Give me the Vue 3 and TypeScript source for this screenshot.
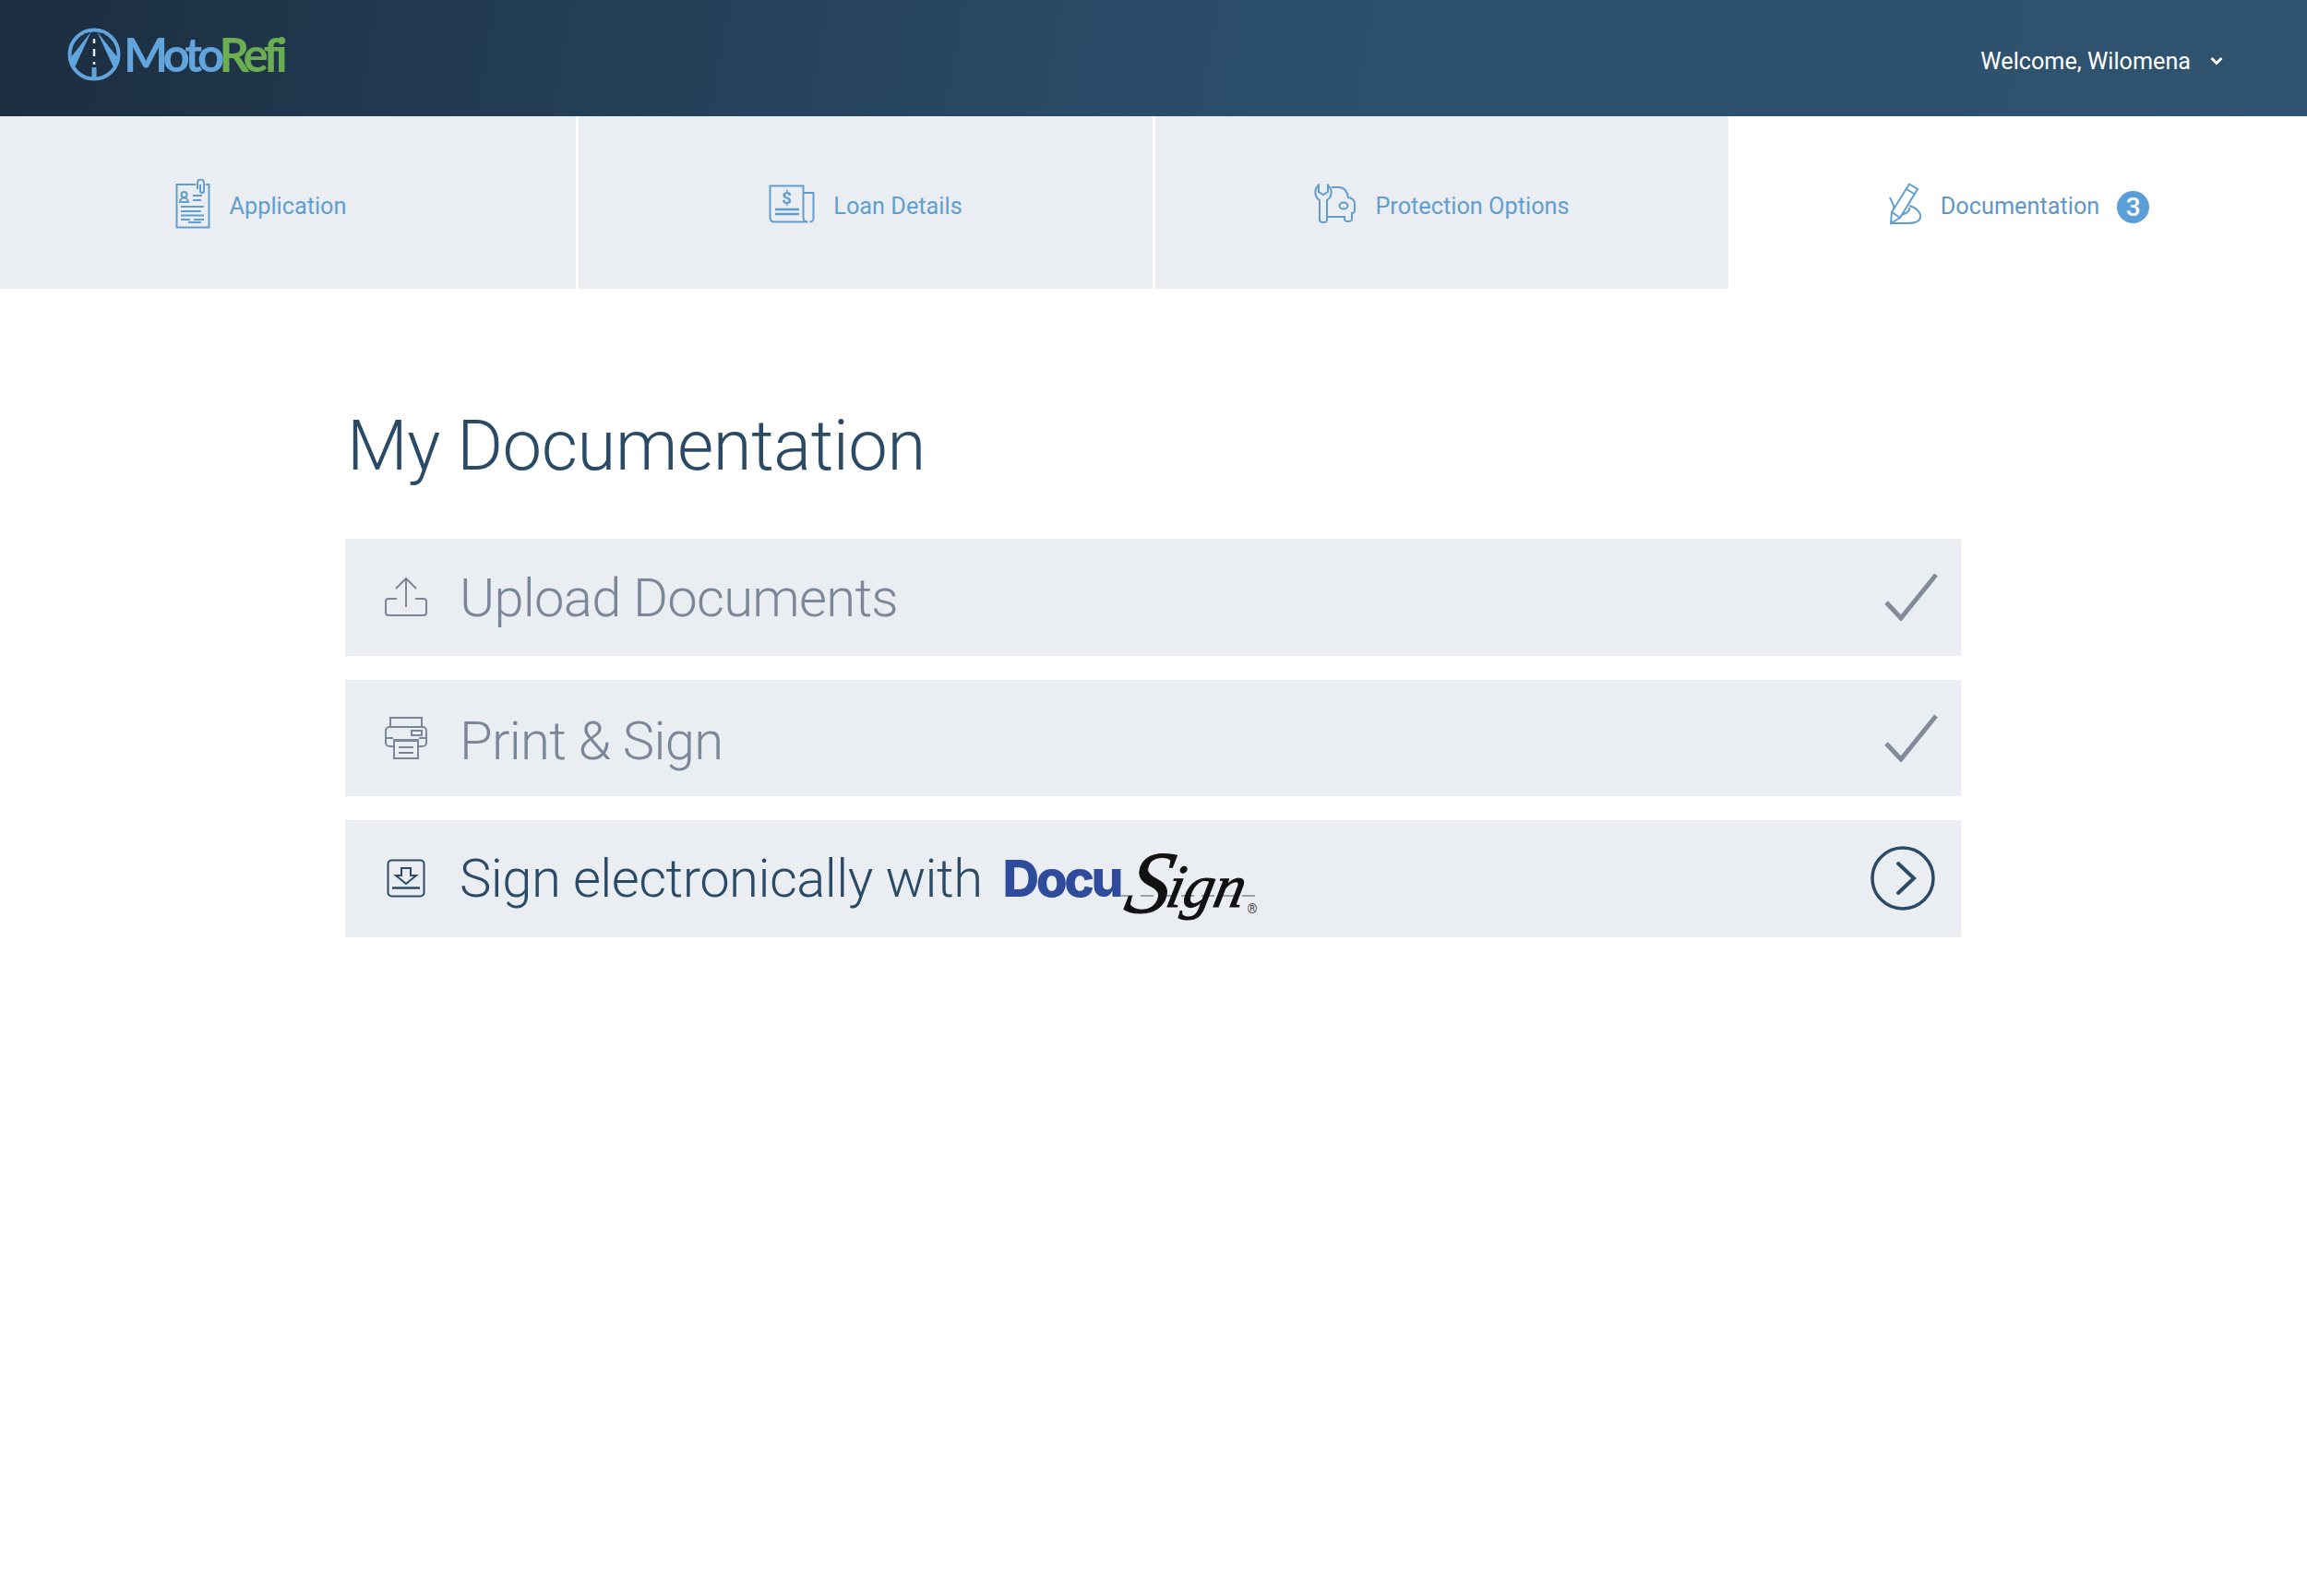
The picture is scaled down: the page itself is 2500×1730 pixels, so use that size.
<script setup lang="ts">
type Tab = {
  key: string;
  label: string;
  active?: boolean;
  badge?: number;
};

const tabs: Array<Tab> = [
  { key: "application", label: "Application" },
  { key: "loan", label: "Loan Details" },
  { key: "protection", label: "Protection Options" },
  { key: "documentation", label: "Documentation", active: true, badge: 3 },
];
</script>

<template>
  <div class="page">
    <header class="top-bar">
      <div class="logo">
        <svg class="logo-mark" viewBox="0 0 58 58" fill="none">
          <circle cx="29" cy="29" r="26.5" stroke="#62a4dc" stroke-width="4" />
          <path d="M26 4 L3 33 L8 43 Z" fill="#62a4dc" />
          <path d="M32 4 L55 33 L50 43 Z" fill="#62a4dc" />
          <path d="M20 6 L6 25 M38 6 L52 25" stroke="#22394f" stroke-width="2" />
          <path d="M29 12v5M29 23v8M29 37v3" stroke="#dfeaf3" stroke-width="2.5" />
          <path d="M29 43v12" stroke="#62a4dc" stroke-width="5" />
        </svg>
        <span class="logo-text"><span class="moto">Moto</span><span class="refi">Refi</span></span>
      </div>
      <div class="user">
        <span>Welcome, Wilomena</span>
        <svg class="chevron" viewBox="0 0 14 10" fill="none">
          <path d="M1.5 2 L7 7.5 L12.5 2" stroke="#fff" stroke-width="3" />
        </svg>
      </div>
    </header>

    <nav class="tabs">
      <div
        v-for="tab in tabs"
        :key="tab.key"
        class="tab"
        :class="[tab.key, { active: tab.active }]"
      >
        <svg v-if="tab.key === 'application'" class="tab-icon" width="38" height="54" viewBox="0 0 38 54" fill="none">
          <path d="M22 6H1.5v46.5h35V6H33" />
          <path d="M24 11V4a3.5 3.5 0 0 1 7 0v9a2 2 0 0 1-4 0V6" />
          <circle cx="9.5" cy="17" r="3" />
          <path d="M5 25c0-6 9-6 9 0zM19 18h10M19 23h9M6 30h25M6 35h22M6 39.5h25M6 44h10M14 47h14M20 44h11" />
        </svg>
        <svg v-else-if="tab.key === 'loan'" class="tab-icon" width="50" height="42" viewBox="0 0 50 42" fill="none">
          <path d="M1.5 1.5h36v34c0 3 2 5 5 5H6c-3 0-4.5-2-4.5-5z" />
          <path d="M37.5 9h11v28c0 2-2 3.5-4 3.500" />
          <path d="M7 27h26M7 32h26" stroke-width="2.5" />
          <text x="19.500" y="21" class="dollar">$</text>
        </svg>
        <svg v-else-if="tab.key === 'protection'" class="tab-icon" width="46" height="44" viewBox="0 0 46 44" fill="none">
          <path d="M5 1.5C0 6 0 14 6 18v21c0 4 8 4 8 0V18c6-4 6-12 1-16.500V9l-5 3-5-3z" />
          <path d="M19 4h8c6 0 9 5 10 11 5 1 7 3 7 7v7c0 2-1 3-3 3v6c0 4-8 4-8 0v-2H14" />
          <ellipse cx="32" cy="24" rx="4.5" ry="3.5" />
        </svg>
        <svg v-else class="tab-icon" width="36" height="46" viewBox="0 0 36 46" fill="none">
          <path d="M2 44 L3 32 L22 1.5 L31 7 L12 38 Z" />
          <path d="M19 7 L28 12.5 M3 32 L12 38" />
          <path d="M1 16c2 5 5 8 4 12M22 25c8 2 13 8 12 13-1 5-8 6-14 6-6 0-12 0-18 0" />
          <path d="M14 35c4-2 9-3 8-8" />
        </svg>
        <span class="tab-label">{{ tab.label }}</span>
        <span v-if="tab.badge" class="badge">{{ tab.badge }}</span>
      </div>
    </nav>

    <main class="content">
      <h1 class="title">My Documentation</h1>
      <div class="rows">
        <div class="row done">
          <svg class="row-icon" width="48" height="44" viewBox="0 0 48 44" fill="none">
            <path d="M14 24H5a3 3 0 0 0-3 3v12a3 3 0 0 0 3 3h38a3 3 0 0 0 3-3V27a3 3 0 0 0-3-3h-9" />
            <path d="M24 33V2M13 13 L24 2 L35 13" />
          </svg>
          <span class="row-text up">Upload Documents</span>
          <svg class="check" width="58" height="52" viewBox="0 0 58 52" fill="none">
            <path d="M2 32 L18 49 L56 2" />
          </svg>
        </div>
        <div class="row done">
          <svg class="row-icon" width="48" height="48" viewBox="0 0 48 48" fill="none">
            <path d="M7 12V2h34v10" />
            <path d="M10 33H6a4 4 0 0 1-4-4V16a4 4 0 0 1 4-4h36a4 4 0 0 1 4 4v13a4 4 0 0 1-4 4h-4" />
            <path d="M2 24h8M38 24h8M10 26h28" />
            <path d="M11 27h26v19H11zM16 34h16M16 40h16" />
            <rect x="30" y="16" width="11" height="5" />
          </svg>
          <span class="row-text shift">Print &amp; Sign</span>
          <svg class="check" width="58" height="52" viewBox="0 0 58 52" fill="none">
            <path d="M2 32 L18 49 L56 2" />
          </svg>
        </div>
        <div class="row live">
          <svg class="row-icon sign" width="42" height="42" viewBox="0 0 42 42" fill="none">
            <rect x="1.5" y="1.5" width="39" height="39" rx="4" />
            <path d="M16 10h10v8h6L21 27 10 18h6z" />
            <path d="M6 31.5h30" stroke-width="2.5" />
          </svg>
          <span class="row-text">Sign electronically with</span>
          <div class="docusign">
            <span class="docu">Docu</span>
            <span class="dash"></span>
            <span class="script"><span class="big-s">S</span>ign</span>
            <span class="reg">®</span>
          </div>
          <svg class="go" width="70" height="70" viewBox="0 0 70 70" fill="none">
            <circle cx="35" cy="35" r="33" />
            <path d="M30 19 L47 35 L30 51" stroke-width="4" stroke-linecap="round" />
          </svg>
        </div>
      </div>
    </main>
  </div>
</template>

<style>
html,
body {
  margin: 0;
  background: #fff;
}
</style>

<style scoped>
.page {
  min-height: 1730px;
  background: #fff;
  font-family: Roboto, "Liberation Sans", sans-serif;
}

.top-bar {
  display: flex;
  align-items: center;
  justify-content: space-between;
  box-sizing: border-box;
  height: 126px;
  padding: 0 91px 0 73px;
  background: linear-gradient(100deg, #1c2d3f 0%, #223c54 22%, #2b4e6b 55%, #30546f 100%);
}

.logo {
  display: flex;
  align-items: center;
  gap: 3px;
  margin-top: -8px;
}

.logo-mark {
  width: 58px;
  height: 58px;
}

.logo-text {
  font-family: Lato, sans-serif;
  font-size: 51px;
  font-weight: 700;
  letter-spacing: -5px;
  line-height: 58px;
}

.moto {
  color: #62a4dc;
}

.refi {
  color: #6aae4f;
}

.user {
  display: flex;
  align-items: center;
  gap: 21px;
  margin-top: 6px;
  color: #fff;
  font-size: 25.2px;
  font-weight: 400;
}

.chevron {
  width: 14px;
  height: 10px;
}

.tabs {
  display: grid;
  grid-template-columns: 624px 622px 621px 1fr;
  gap: 3px;
  height: 187px;
}

.tab {
  display: flex;
  align-items: center;
  justify-content: center;
  padding-top: 3px;
  background: #eaeef3;
  color: #629ecd;
  font-size: 25.3px;
}

.tab.application {
  padding-right: 58px;
}

.tab.active {
  background: #fff;
  color: #5f96c6;
}

.tab-icon {
  margin-right: 20px;
  stroke: #629ecd;
  stroke-width: 2;
}

.dollar {
  fill: #629ecd;
  stroke: none;
  font-family: Roboto, sans-serif;
  font-size: 19px;
  font-weight: 700;
  text-anchor: middle;
}

.tab-label {
  margin-top: 6px;
  line-height: 30px;
}

.badge {
  display: flex;
  align-items: center;
  justify-content: center;
  width: 35px;
  height: 35px;
  margin-top: 6px;
  margin-left: 19px;
  border-radius: 50%;
  background: #5b9fd9;
  color: #fff;
  font-size: 28px;
  font-weight: 500;
}

.content {
  padding: 0 375px 0 374px;
}

.title {
  margin: 0;
  padding: 110px 0 41px 2px;
  color: #2a4a66;
  font-size: 76px;
  font-weight: 300;
  letter-spacing: -0.4px;
  line-height: 120px;
}

.rows {
  display: flex;
  flex-direction: column;
  gap: 26px;
}

.row {
  display: flex;
  align-items: center;
  height: 126.5px;
  padding-left: 42px;
  background: #eaeef3;
}

.row-icon {
  flex: none;
  stroke-width: 2;
}

.row-text {
  margin-left: 34px;
  font-size: 58px;
  font-weight: 300;
  letter-spacing: -0.75px;
  line-height: 80px;
}

.row-text.up {
  position: relative;
  top: 1px;
}

.row-text.shift {
  position: relative;
  top: 3px;
}

.done {
  color: #7b8799;
}

.done .row-icon {
  stroke: #7b8799;
}

.live {
  color: #2a4a66;
}

.live .row-icon {
  margin-left: 3px;
  stroke: #2a4a66;
}

.live .row-text {
  margin-left: 37px;
  letter-spacing: -0.55px;
}

.check {
  margin-left: auto;
  margin-right: 25px;
  stroke: #838b9b;
  stroke-width: 5;
}

.go {
  margin-left: auto;
  margin-right: 28px;
  stroke: #2a4a66;
  stroke-width: 3.5;
}

.docusign {
  position: relative;
  display: flex;
  align-items: baseline;
  margin-left: 22px;
  height: 100px;
  width: 290px;
}

.docu {
  color: #2f4b9b;
  font-family: Inter, sans-serif;
  font-size: 55px;
  font-weight: 800;
  letter-spacing: -3.5px;
  line-height: 100px;
}

.script {
  position: absolute;
  left: 136px;
  top: -6px;
  color: #111;
  font-family: "Liberation Serif", serif;
  font-size: 66px;
  font-style: italic;
  -webkit-text-stroke: 1px #111;
  line-height: 110px;
  transform: skewX(-12deg);
}

.big-s {
  position: relative;
  top: 6px;
  margin-right: -4px;
  font-size: 96px;
}

.reg {
  position: absolute;
  left: 265px;
  top: 75px;
  color: #444;
  font-size: 14px;
  line-height: 16px;
}

.dash {
  position: absolute;
  left: 127px;
  right: 12px;
  top: 68px;
  height: 2px;
  background: repeating-linear-gradient(90deg, #9ba1aa 0 14px, transparent 14px 22px);
}
</style>
